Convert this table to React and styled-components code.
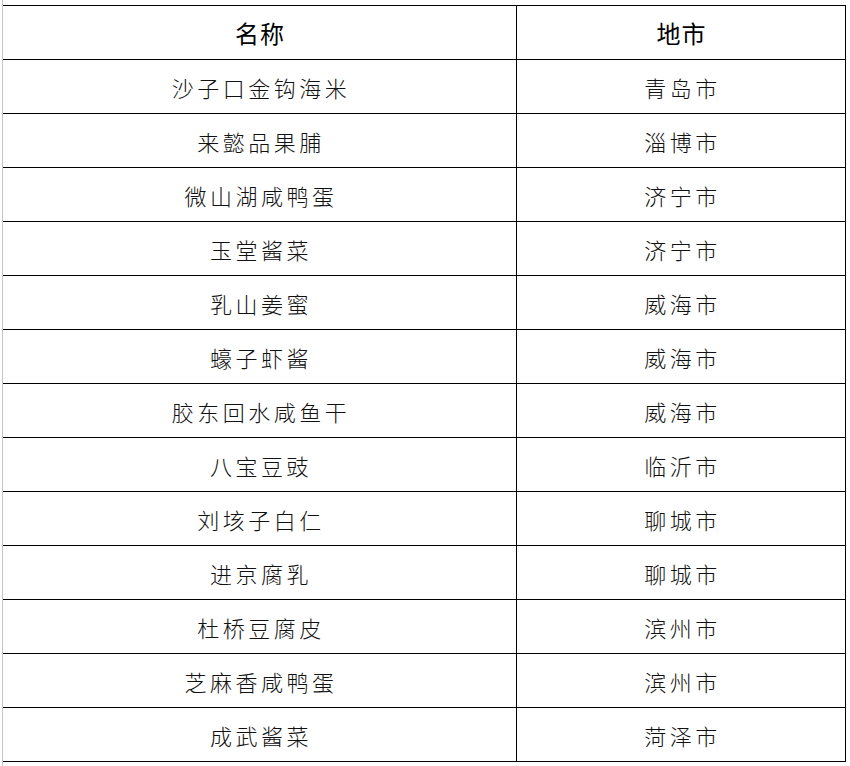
import React from "react";
import styled, { createGlobalStyle } from "styled-components";

const rows = [
  ["沙子口金钩海米", "青岛市"],
  ["来懿品果脯", "淄博市"],
  ["微山湖咸鸭蛋", "济宁市"],
  ["玉堂酱菜", "济宁市"],
  ["乳山姜蜜", "威海市"],
  ["蠔子虾酱", "威海市"],
  ["胶东回水咸鱼干", "威海市"],
  ["八宝豆豉", "临沂市"],
  ["刘垓子白仁", "聊城市"],
  ["进京腐乳", "聊城市"],
  ["杜桥豆腐皮", "滨州市"],
  ["芝麻香咸鸭蛋", "滨州市"],
  ["成武酱菜", "菏泽市"],
];

const GlobalStyle = createGlobalStyle`
  body {
    margin: 0;
    background: #fff;
    font-family: "Noto Sans CJK SC", "Noto Sans", sans-serif;
  }
`;

const Page = styled.div`
  width: 850px;
  height: 766px;
  overflow: hidden;
  background: #fff;
  border-left: 1px solid #c4c4c4;
  margin-left: 2px;
  box-sizing: border-box;
  padding-top: 5px;
`;

const Table = styled.table`
  border-collapse: collapse;
  width: 843px;
  table-layout: fixed;
`;

const Cell = styled.td`
  height: 53px;
  padding: 0;
  border-top: 1px solid #000;
  border-bottom: 1px solid #000;
  border-right: 1px solid #000;
  text-align: center;
  vertical-align: middle;
  font-size: ${(p) => (p.$head ? "24px" : "22px")};
  font-weight: ${(p) => (p.$head ? 400 : 300)};
  letter-spacing: ${(p) => (p.$head ? "1px" : "3.5px")};
  color: ${(p) => (p.$head ? "#000" : "#111")};
  padding-left: ${(p) => (p.$head ? "1px" : "3px")};
  width: ${(p) => p.$w};
`;

const App = () => (
  <>
    <GlobalStyle />
    <Page>
      <Table>
        <thead>
          <tr>
            <Cell as="th" $head $w="512px">名称</Cell>
            <Cell as="th" $head>地市</Cell>
          </tr>
        </thead>
        <tbody>
          {rows.map(([name, city], i) => (
            <tr key={i}>
              <Cell $w="512px">{name}</Cell>
              <Cell>{city}</Cell>
            </tr>
          ))}
        </tbody>
      </Table>
    </Page>
  </>
);

export default App;
